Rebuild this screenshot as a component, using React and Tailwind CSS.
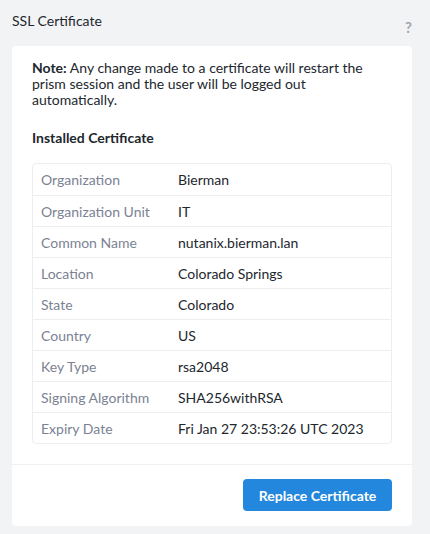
const rows = [
  ['Organization', 'Bierman'],
  ['Organization Unit', 'IT'],
  ['Common Name', 'nutanix.bierman.lan'],
  ['Location', 'Colorado Springs'],
  ['State', 'Colorado'],
  ['Country', 'US'],
  ['Key Type', 'rsa2048'],
  ['Signing Algorithm', 'SHA256withRSA'],
  ['Expiry Date', 'Fri Jan 27 23:53:26 UTC 2023'],
]

export default function App() {
  return (
    <div
      className="min-h-[534px] bg-[#f2f3f5] pl-3 pr-[18px] pb-2 text-[#22272e]"
      style={{ fontFamily: 'Lato, "Open Sans", sans-serif' }}
    >
      <div className="flex h-[46px] items-start justify-between pt-[12px]">
        <h1 className="text-[14px] leading-[18px]">SSL Certificate</h1>
        <span className="mt-[8px] text-[15px] font-bold leading-[15px] text-[#a0a6b0]">?</span>
      </div>

      <div className="rounded-[4px] bg-white">
        <div className="px-5 pt-[14px] pb-[20px] text-[14px]">
          <p className="leading-[16px]">
            <span className="font-bold">Note:</span> Any change made to a certificate will restart the
            prism session and the user will be logged out automatically.
          </p>
          <h2 className="mt-[21px] font-bold leading-[17px]">Installed Certificate</h2>

          <div className="mt-[17px] rounded-[4px] border border-[#eceef1]">
            {rows.map(([k, v], i) => (
              <div
                key={k}
                className={'flex h-[31px] items-center ' + (i ? 'border-t border-[#eceef1]' : '')}
              >
                <div className="w-[145px] pl-[8px] text-[#7b8293]">{k}</div>
                <div>{v}</div>
              </div>
            ))}
          </div>
        </div>
        <div className="flex justify-end border-t border-[#eef0f2] px-5 pt-[14px] pb-[15px]">
          <button className="h-[32px] w-[149px] rounded-[4px] bg-[#2387dd] text-[14px] font-bold text-white">
            Replace Certificate
          </button>
        </div>
      </div>
    </div>
  )
}
